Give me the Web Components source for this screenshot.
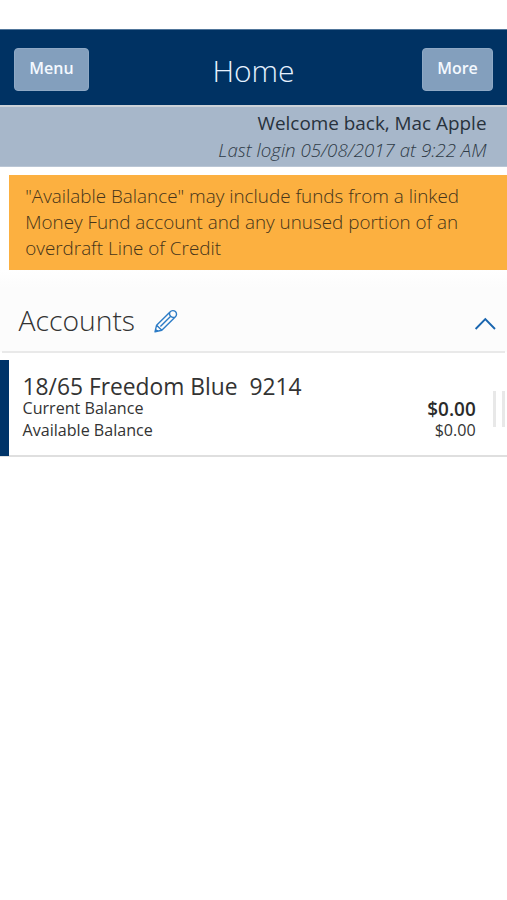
<!DOCTYPE html>
<html lang="en"><head><meta charset="utf-8"><title>Home</title>
<style>body{margin:0;background:#fff;color:#333;font-family:"Open Sans","Noto Sans",sans-serif}</style>
</head><body>
<bank-page></bank-page>
<script>
const define = (name, html) => customElements.define(name, class extends HTMLElement {
  constructor() {
    super();
    this.attachShadow({mode: 'open'}).innerHTML = html;
  }
});

define('nav-button', `<style>
:host{display:block;box-sizing:border-box;width:75px;height:43px;border-radius:4px;background:#839fbd;border:1px solid #8fa9c5;color:#f4f9ff;font-weight:600;font-size:16px;line-height:38px;text-align:center}
</style><slot></slot>`);

define('nav-bar', `<style>
:host{display:grid;box-sizing:border-box;grid-template-columns:75px 1fr 71px;height:76px;padding:18px 14px 0;background:#003263;border-top:1px solid #51769b}
h1{margin:0;padding-right:4px;font-weight:300;font-size:30px;line-height:46px;color:#e6f2ff;text-align:center}
.end{width:71px}
</style><nav-button>Menu</nav-button><h1><slot></slot></h1><nav-button class="end">More</nav-button>`);

define('welcome-strip', `<style>
:host{display:block;box-sizing:border-box;height:62px;padding:3px 20.5px 0 0;border-top:2px solid #ccd2d8;border-bottom:1px solid #bac6d5;background:#a7b7ca;text-align:right}
div{font-size:18.9px;line-height:26px;color:#28323d}
.last{font-size:18.7px;line-height:28px;font-weight:300;font-style:italic;color:#2f3b47}
</style><div><slot></slot></div><div class="last"><slot name="last"></slot></div>`);

define('notice-box', `<style>
:host{display:block;box-sizing:border-box;height:95px;margin:8px 0 0 9px;padding:9px 40px 0 16.2px;background:#fcb040;color:#45341a;font-size:18.85px;font-weight:300;line-height:25.8px;white-space:nowrap}
</style><slot></slot>`);

define('section-head', `<style>
:host{display:flex;box-sizing:border-box;height:82px;background:linear-gradient(#fff,#fcfcfc 18px);padding:0 11px 0 18.5px;align-items:flex-start}
h2{margin:30px 0 0;font-weight:300;font-size:28.3px;line-height:41px;color:#333}
.pen{margin:39px 0 0 17.5px;width:25px;height:25px}
.chev{margin:47px 0 0 auto;width:22px;height:14px}
svg{fill:none;stroke:#2d7cc6}
</style><h2><slot></slot></h2>
<svg class="pen" viewBox="0 0 25 25" stroke-width="1.4" stroke-linejoin="round"><path d="M2 22.8 3.6 16.2 17 3C18.5 1.2 21 1.2 22.4 2.6 23.9 4.1 24 6.4 22.2 8L8.8 21.2ZM3.6 16.2 8.8 21.2M16.6 3.4C16 6.7 18.2 9 21.7 8.4M7.4 17.6 17.2 7.8M2.6 20.4 4.6 22.3"/></svg>
<svg class="chev" viewBox="0 0 22 14" stroke-width="1.9"><path d="M1.6 12 11.3 2.2 21 12" stroke="#1965af"/></svg>`);

define('account-row', `<style>
:host{display:grid;box-sizing:border-box;grid-template-columns:9px 1fr auto auto;height:97px;background:linear-gradient(#dfdfdf,#dfdfdf) 0 100%/100% 2px no-repeat #fff}
.bar{background:#003469;height:96px}
.info{padding:13px 0 0 13.5px}
.name{font-size:22.8px;line-height:27px;white-space:pre}
.label{font-size:16.1px;line-height:21.5px;margin-top:-2px}
.label+.label{margin-top:0}
.sums{padding:38px 17.3px 0 0;text-align:right;font-size:16.1px;line-height:21.5px}
b{display:block;font-size:18.9px;font-weight:600;line-height:22px;color:#2b2b2b}
.grip{box-sizing:border-box;width:12px;height:36px;margin:31px 2px 0 0;border:solid #e8e8e8;border-width:0 3px}
</style><div class="bar"></div><div class="info"><div class="name"><slot></slot></div><div class="label">Current Balance</div><div class="label">Available Balance</div></div>
<div class="sums"><b><slot name="current"></slot></b><slot name="available"></slot></div><div class="grip"></div>`);

define('bank-page', `<style>
:host{display:block;width:507px;height:900px;padding-top:29px;box-sizing:border-box;overflow:hidden}
hr{border:0;height:2px;margin:-1px 2px 7px;background:#e9e9e9}
</style>
<nav-bar>Home</nav-bar>
<welcome-strip>Welcome back, Mac Apple<span slot="last">Last login 05/08/2017 at 9:22 AM</span></welcome-strip>
<notice-box>"Available Balance" may include funds from a linked<br>Money Fund account and any unused portion of an<br>overdraft Line of Credit</notice-box>
<section-head>Accounts</section-head><hr>
<account-row>18/65 Freedom Blue&nbsp; 9214<span slot="current">$0.00</span><span slot="available">$0.00</span></account-row>`);
</script></body></html>
